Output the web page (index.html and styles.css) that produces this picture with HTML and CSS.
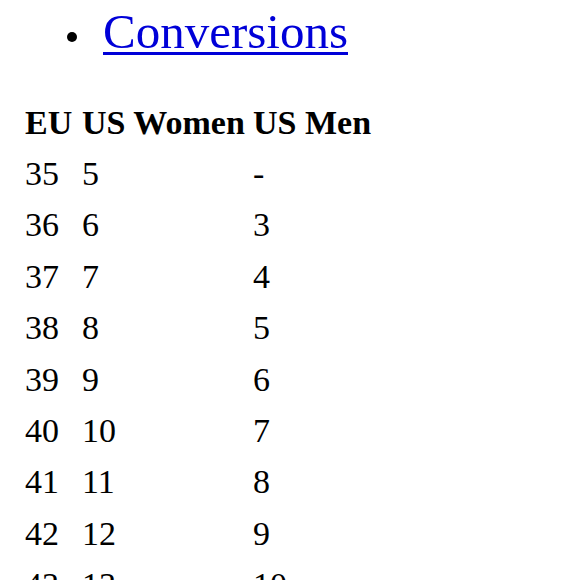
FILE: index.html
```html
<!DOCTYPE html>
<html>
<head>
<meta charset="utf-8">
<link rel="stylesheet" href="styles.css">
</head>
<body>
<ul class="nav">
  <li class="nav-item"><a class="nav-link" href="#conversions">Conversions</a></li>
</ul>
<table class="sizes">
  <thead>
    <tr><th class="c1">EU</th><th class="c2">US Women</th><th class="c3">US Men</th></tr>
  </thead>
  <tbody>
    <tr><td>35</td><td>5</td><td>-</td></tr>
    <tr><td>36</td><td>6</td><td>3</td></tr>
    <tr><td>37</td><td>7</td><td>4</td></tr>
    <tr><td>38</td><td>8</td><td>5</td></tr>
    <tr><td>39</td><td>9</td><td>6</td></tr>
    <tr><td>40</td><td>10</td><td>7</td></tr>
    <tr><td>41</td><td>11</td><td>8</td></tr>
    <tr><td>42</td><td>12</td><td>9</td></tr>
    <tr><td>43</td><td>13</td><td>10</td></tr>
    <tr><td>44</td><td>14</td><td>11</td></tr>
  </tbody>
</table>
</body>
</html>
```
FILE: styles.css
```css
html, body {
  margin: 0;
  padding: 0;
  background: #ffffff;
  color: #000000;
  font-family: "Liberation Serif", "Times New Roman", serif;
}

.nav {
  margin: 2px 0 0 0;
  padding: 0 0 0 67px;
  list-style: none;
}

.nav-item {
  display: flex;
  align-items: flex-start;
  font-size: 49px;
  line-height: 60px;
}

.nav-item::before {
  content: "";
  flex: none;
  width: 10px;
  height: 10px;
  margin: 30px 26px 0 0;
  border-radius: 50%;
  background: #000000;
}

.nav-link {
  color: #0000d8;
  text-decoration: underline;
  text-decoration-thickness: 2.5px;
  text-underline-offset: 4px;
}

.sizes {
  margin: 34.5px 0 0 25px;
  border-collapse: collapse;
  border-spacing: 0;
  font-size: 34px;
  line-height: 51.4px;
}

.sizes th,
.sizes td {
  padding: 0;
  text-align: left;
  vertical-align: baseline;
}

.sizes th {
  font-weight: bold;
}

.c1 { width: 57px; }
.c2 { width: 171px; }
.c3 { width: 200px; }
```
